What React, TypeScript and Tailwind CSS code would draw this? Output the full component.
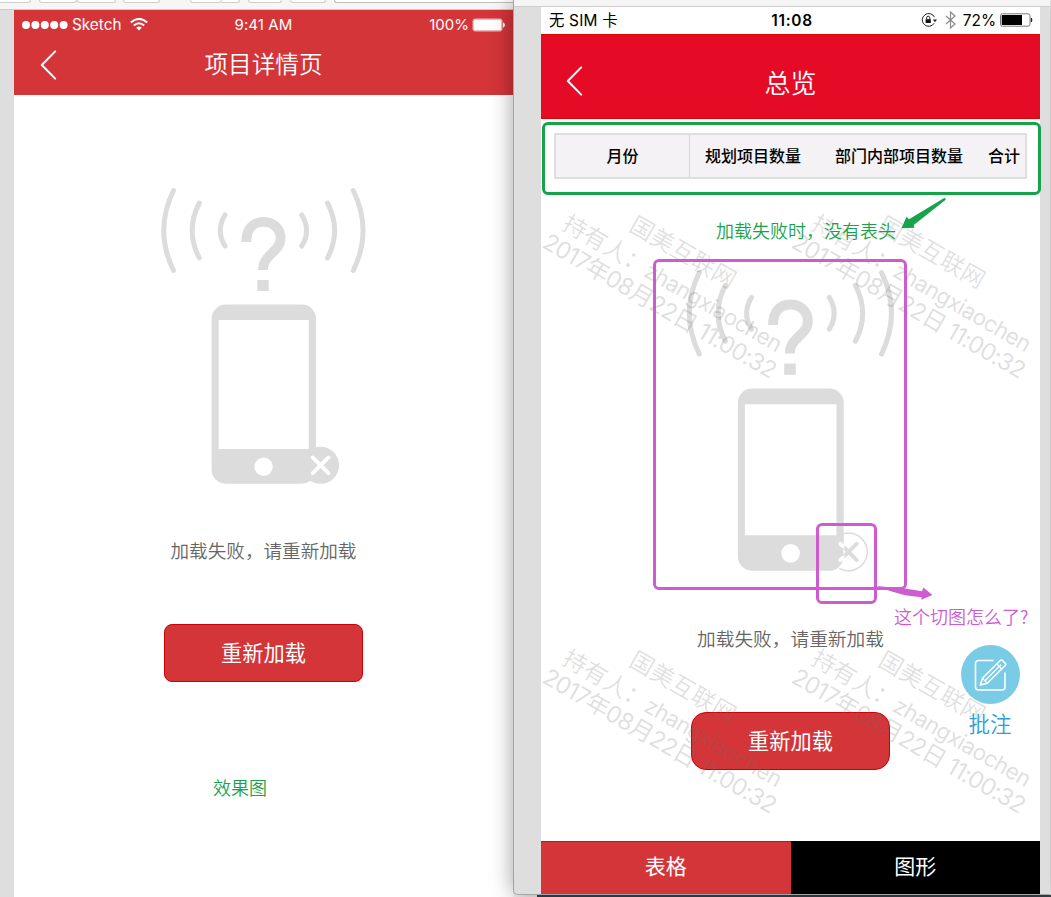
import React from "react";

const sans = "font-['Inter','Noto_Sans_CJK_SC',sans-serif]";
const cjk = "font-['Noto_Sans_CJK_SC',sans-serif]";

function SignalArcs() {
  return (
    <g fill="none" stroke="#dcdcdc" strokeWidth="5" strokeLinecap="round">
      <path d="M173.5 190.5Q154 230.5 173.5 270.5" />
      <path d="M199.3 203Q185 230.5 199.3 258" />
      <path d="M225 215Q215.5 230.5 225 246" />
      <path d="M301.8 215Q311.3 230.5 301.8 246" />
      <path d="M327.5 203Q341.8 230.5 327.5 258" />
      <path d="M353.3 190.5Q372.8 230.5 353.3 270.5" />
    </g>
  );
}

function FailureArt({ outlined, className }: { outlined?: boolean; className: string }) {
  return (
    <svg viewBox="160 185 208 302" preserveAspectRatio="none" className={className}>
      <SignalArcs />
      <path
        d="M246.3 242C246.3 229.5 252.5 221.9 263.7 221.9C274 221.9 280.6 229.5 280.6 238C280.6 245 276.6 248.6 271.6 253.5C266 259 262.9 262.5 262.9 270"
        fill="none"
        stroke="#dcdcdc"
        strokeWidth="9.8"
      />
      <rect x="257.3" y="280" width="11.4" height="11" fill="#dcdcdc" />
      <path
        fillRule="evenodd"
        fill="#dcdcdc"
        d="M225.6 304.6H302a14 14 0 0 1 14 14V469.7a14 14 0 0 1 -14 14H225.6a14 14 0 0 1 -14 -14V318.6a14 14 0 0 1 14 -14ZM218.6 320V449H308.8V320ZM254.4 466.7a9.2 9.2 0 1 0 18.4 0a9.2 9.2 0 1 0 -18.4 0Z"
      />
      {outlined ? (
        <>
          <path d="M316 447.4A18.5 18.5 0 1 1 311.5 481.4" fill="none" stroke="#dcdcdc" strokeWidth="1.5" />
          <path d="M312.6 457.2L328.8 473.4M328.8 457.2L312.6 473.4" stroke="#dcdcdc" strokeWidth="3.8" strokeLinecap="round" />
          <path d="M312.6 457.2L315 459.6M312.6 473.4L315 471" stroke="#fff" strokeWidth="3.8" strokeLinecap="round" />
          <path d="M316.2 461V469.7Q316 476 311.5 480" fill="none" stroke="#fff" strokeWidth="0.6" />
        </>
      ) : (
        <>
          <circle cx="320.6" cy="465.3" r="18.5" fill="#dcdcdc" />
          <path d="M312.7 457.4L328.5 473.2M328.5 457.4L312.7 473.2" stroke="#fff" strokeWidth="3.8" strokeLinecap="round" />
        </>
      )}
    </svg>
  );
}

function Chevron() {
  return (
    <svg width="18" height="32" viewBox="0 0 18 32" className="block">
      <path d="M15.2 2.4L1.8 16L15.2 29.6" fill="none" stroke="#fff" strokeWidth="2" strokeLinecap="round" strokeLinejoin="round" />
    </svg>
  );
}

function LeftWindow() {
  return (
    <section className="flex h-[897px] w-[513px] shrink-0 flex-col bg-[#dedede]">
      <div className="flex h-[10px] items-start overflow-hidden border-b border-[#cdcdcd] bg-[#f6f6f6]">
        <div className="h-[3px] w-[31px] rounded-br-[3px] border-r border-b border-[#cfcfcf] bg-white" />
        <div className="ml-[8px] h-[3px] w-[38px] rounded-b-[3px] border border-t-0 border-[#cfcfcf] bg-white" />
        <div className="h-[3px] w-[39px] rounded-b-[3px] border border-t-0 border-[#cfcfcf] bg-white" />
        <div className="ml-[7px] h-[3px] w-[37px] rounded-b-[3px] border border-t-0 border-[#cfcfcf] bg-white" />
        <div className="ml-[30px] h-[3px] w-[32px] rounded-b-[3px] border border-t-0 border-[#cfcfcf] bg-white" />
        <div className="h-[3px] w-[18px] rounded-br-[3px] border-r border-b border-[#cfcfcf] bg-white" />
        <div className="ml-[8px] h-[3px] w-[34px] rounded-b-[3px] border border-t-0 border-[#cfcfcf] bg-white" />
        <div className="ml-[8px] h-[3px] w-[36px] rounded-b-[3px] border border-t-0 border-[#cfcfcf] bg-white" />
        <div className="ml-[8px] h-[3px] flex-1 rounded-bl-[3px] border-b border-l border-[#bdbdbd] bg-white" />
      </div>
      <div className="ml-[14px] flex flex-1 flex-col bg-white">
        <header className="h-[85px] bg-[#d33539] text-white">
          <div className={`${sans} grid h-[28px] grid-cols-3 items-center text-[15px] leading-[28px]`}>
            <div className="flex items-center pl-[8px]">
              <svg width="46" height="10" viewBox="0 0 46 10" fill="#fff">
                <circle cx="4" cy="5" r="4" />
                <circle cx="13.4" cy="5" r="4" />
                <circle cx="22.8" cy="5" r="4" />
                <circle cx="32.2" cy="5" r="4" />
                <circle cx="41.6" cy="5" r="4" />
              </svg>
              <span className="ml-[4px] w-[50px] pt-[1px] text-[15.3px] whitespace-nowrap">Sketch</span>
              <svg width="18" height="13" viewBox="0 0 18 13" className="ml-[8px]">
                <g fill="none" stroke="#fff" strokeWidth="2">
                  <path d="M0.8 4.6Q9 -2.8 17.2 4.6" />
                  <path d="M3.8 7.5Q9 3 14.2 7.5" />
                </g>
                <path d="M6.2 9.7Q9 7.4 11.8 9.7L9 12.6Z" fill="#fff" />
              </svg>
            </div>
            <div className="pt-[1px] text-center tracking-[0.1px]">9:41 AM</div>
            <div className="flex items-center justify-end pr-[7px]">
              <span className="pt-[1px]">100%</span>
              <svg width="34" height="14" viewBox="0 0 34 14" className="ml-[3px]">
                <rect x="0.5" y="0.5" width="30" height="13" rx="3" fill="#fff" fillOpacity=".65" />
                <rect x="2" y="2" width="27" height="10" rx="1" fill="#fff" />
                <path d="M31.5 4.8q2 2.2 0 4.4z" fill="#fff" stroke="#fff" />
              </svg>
            </div>
          </div>
          <div className="grid h-[53px] grid-cols-[60px_1fr_60px] items-center">
            <div className="pl-[26px]">
              <Chevron />
            </div>
            <h1 className={`${cjk} pb-[2px] text-center text-[23.6px] leading-[51px] font-[350]`}>项目详情页</h1>
          </div>
        </header>
        <main className={`${cjk} flex flex-1 flex-col items-center`}>
          <FailureArt className="mt-[90px] h-[302px] w-[208px]" />
          <p className="mt-[49px] text-[18.6px] leading-[28px] font-[350] text-[#666]">加载失败，请重新加载</p>
          <button className="mt-[60px] h-[58px] w-[199px] rounded-[8px] border border-[#cc0007] bg-[#d33539] pb-[2px] text-[21.2px] text-white">
            重新加载
          </button>
          <p className="mt-[91px] mr-[47px] text-[18px] leading-[28px] font-[350] text-[#18a34b]">效果图</p>
        </main>
      </div>
    </section>
  );
}

function StatusIcons() {
  return (
    <div className="flex items-center justify-end">
      <svg width="16" height="16" viewBox="0 0 16 16" fill="none" stroke="#222" strokeWidth="1">
        <path d="M13.5 5.2A6.4 6.4 0 1 0 13.2 11.2" />
        <path d="M11.8 7.6H16L13.9 10.2Z" fill="#222" stroke="none" />
        <rect x="4.6" y="7.2" width="5.2" height="3.8" fill="#111" stroke="none" />
        <path d="M5.6 7.2V5.8a1.6 1.6 0 0 1 3.2 0V7.2" />
      </svg>
      <svg width="11" height="18" viewBox="0 0 11 18" className="ml-[8px]">
        <path d="M1 5L10 13L5.5 17V1L10 5L1 13" fill="none" stroke="#8a8a8a" strokeWidth="1.2" />
      </svg>
      <span className="ml-[7px] pt-[1px]">72%</span>
      <svg width="33" height="14" viewBox="0 0 33 14" className="ml-[4px]">
        <rect x="0.5" y="0.8" width="29.5" height="12.4" rx="2" fill="#fff" stroke="#777" />
        <rect x="1.7" y="2" width="20.3" height="10" fill="#000" />
        <path d="M31.3 5q1.5 2 0 4z" fill="#000" stroke="#000" strokeWidth=".6" />
      </svg>
    </div>
  );
}

function Watermark({ className }: { className: string }) {
  return (
    <div className={`pointer-events-none absolute flex h-0 w-0 items-center justify-center ${className}`}>
      <div
        className={`${sans} shrink-0 rotate-30 text-center text-[23.6px] leading-[29px] font-[350] whitespace-nowrap text-[rgba(110,110,110,0.22)]`}
      >
        <div className="pr-[13px]">国美互联网</div>
        <div className="translate-y-[3px]">
          持有人：<span className="text-[22.4px] font-normal tracking-[-0.5px]">zhangxiaochen</span>
        </div>
        <div className="font-normal tracking-[-0.75px]">2017年08月22日 11:00:32</div>
      </div>
    </div>
  );
}

function Annotations() {
  return (
    <div className={`${cjk} font-[350]`}>
      <div className="absolute top-[122px] left-[28px] h-[73px] w-[499px] rounded-[6px] border-3 border-[#18a34b]" />
      <p className="absolute top-[216px] left-[202px] text-[18px] leading-[28px] whitespace-nowrap text-[#18a34b]">加载失败时，没有表头</p>
      <div className="absolute top-[259px] left-[139px] h-[331px] w-[254px] rounded-[6px] border-3 border-[#cf5bd0]" />
      <div className="absolute top-[523px] left-[302px] h-[81px] w-[61px] rounded-[6px] border-3 border-[#cf5bd0]" />
      <svg className="absolute top-[196px] left-[386px]" width="48" height="34" viewBox="900 196 48 34">
        <path d="M944.6 197.8L946 199.6L913.8 224.9L914.5 227.7L901.5 228.3L906.5 216.8L909 219.3Z" fill="#18a34b" />
      </svg>
      <svg className="absolute top-[582px] left-[361px]" width="60" height="22" viewBox="875 582 60 22">
        <path d="M876 586L905 588.5L922 591.2L923.3 587.4L932.4 595L921.4 599.8L921.6 597.2L905 595.2L890 591Z" fill="#cf5bd0" />
      </svg>
      <p className="absolute top-[602px] left-[380px] text-[18px] leading-[28px] whitespace-nowrap text-[#cf5bd0]">这个切图怎么了?</p>
      <div className="absolute top-[645px] left-[446px] flex w-[60px] flex-col items-center">
        <div className="flex h-[59px] w-[59px] items-center justify-center rounded-full bg-[#7acbe6]">
          <svg width="34" height="34" viewBox="0 0 34 34" fill="none" stroke="#fff" strokeWidth="1.6" strokeLinejoin="round">
            <path d="M20.5 2.5H5.5a3 3 0 0 0 -3 3V29a3 3 0 0 0 3 3H29a3 3 0 0 0 3 -3V14.5" />
            <path d="M7.3 27L9.5 20.3L27 2.8a2 2 0 0 1 2.8 0L32 5a2 2 0 0 1 0 2.8L14.3 25.2Z" />
            <path d="M23.8 6L28.8 11M9.5 20.3L14.3 25.2M12 22.7L28 6.8" strokeWidth="1.2" />
          </svg>
        </div>
        <span className="text-[21.5px] leading-[38px] text-[#2b9fd8]">批注</span>
      </div>
    </div>
  );
}

function RightWindow() {
  return (
    <section className="relative flex h-[895px] w-[537px] shrink-0 flex-col rounded-bl-[5px] border-b border-l border-[#a5a5a5] bg-[#dedede] shadow-[0_0_22px_rgba(0,0,0,0.38)]">
      <div className="h-[7px] border-b border-[#cdcdcd] bg-[#f5f5f5]" />
      <div className="ml-[27px] flex w-[499px] flex-1 flex-col bg-white">
        <div className={`${sans} grid h-[27px] grid-cols-[1fr_auto_1fr] items-center pr-[7px] pl-[8px] text-[15.4px] text-black`}>
          <span className="pt-[1px] tracking-[0.2px]">无 SIM 卡</span>
          <span className="pt-[1px] pl-[2px] font-semibold tracking-[0.7px]">11:08</span>
          <StatusIcons />
        </div>
        <header className="grid h-[85px] grid-cols-[60px_1fr_60px] items-center border-y border-[#dc0500] bg-[#e50b27] pt-[9px] text-white">
          <div className="pl-[25px]">
            <Chevron />
          </div>
          <h1 className={`${cjk} pt-[2px] text-center text-[26px] leading-[60px] font-[350]`}>总览</h1>
        </header>
        <main className={`${cjk} flex flex-1 flex-col items-center`}>
          <div className="mt-[14px] flex h-[46px] w-[473px] items-stretch border-2 border-[#dfdfdf] bg-[#f4f2f4] text-[16px] leading-[40px] font-medium text-black">
            <div className="w-[134px] border-r border-[#d6d6d6] text-center">月份</div>
            <div className="pl-[15px]">规划项目数量</div>
            <div className="pl-[34px]">部门内部项目数量</div>
            <div className="pl-[25px]">合计</div>
          </div>
          <FailureArt outlined className="mt-[88px] h-[307px] w-[211px] translate-x-[0.5px]" />
          <p className="mt-[50px] text-[18.7px] leading-[28px] font-[350] text-[#666]">加载失败，请重新加载</p>
          <button className="mt-[60px] h-[58px] w-[199px] rounded-[15px] border border-[#cc0007] bg-[#d33539] pb-[3px] text-[21.2px] text-white">
            重新加载
          </button>
        </main>
        <nav className={`${cjk} grid h-[53px] grid-cols-2 text-center text-[21px] leading-[47px] text-white`}>
          <div className="border-t border-[#cc1010] bg-[#d33539]">表格</div>
          <div className="border-t border-black bg-black">图形</div>
        </nav>
      </div>
      <Watermark className="top-[280px] left-[160px]" />
      <Watermark className="top-[280px] left-[409px]" />
      <Watermark className="top-[715px] left-[160px]" />
      <Watermark className="top-[715px] left-[409px]" />
      <Annotations />
    </section>
  );
}

export default function App() {
  return (
    <div className="flex h-[897px] w-[1051px] overflow-hidden bg-[#f4f4f4]">
      <LeftWindow />
      <div className="flex w-[538px] flex-col">
        <RightWindow />
        <div className="ml-[24px] h-[2px] bg-[#2f4651]" />
      </div>
    </div>
  );
}
